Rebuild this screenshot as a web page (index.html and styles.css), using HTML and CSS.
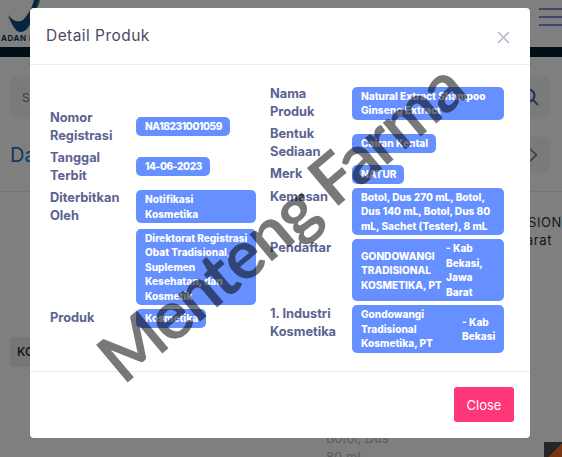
FILE: index.html
```html
<!DOCTYPE html>
<html lang="id">
<head>
  <meta charset="UTF-8" />
  <title>Detail Produk</title>
  <link rel="stylesheet" href="styles.css">
</head>
<body>

  <!-- halaman di belakang modal -->
  <header class="top-bar">
    <div class="logo">
      <svg class="logo-mark" width="40" height="33" viewBox="0 0 40 33">
        <path d="M33 0 C30 10 27 18 24 23 C28 16 36 8 37 0 Z" fill="#1f9a4c"/>
        <path d="M5 15 C10 21 15 23 20 20 C25 15 29 8 31 0 L35 0 C33 12 29 23 24 29 C21 32 17 33 14 31 C10 27 7 21 5 15 Z" fill="#0c4a80"/>
      </svg>
      <span class="logo-text">ADAN POM</span>
    </div>
    <div class="burger"><i></i><i></i><i></i></div>
  </header>
  <div class="dark-strip"></div>

  <div class="search-row">
    <div class="search-box">
      <span>Search</span>
      <svg width="18" height="18" viewBox="0 0 18 18" fill="none" stroke-width="2">
        <circle cx="7.5" cy="7.5" r="6" stroke="#2f62d8"/>
        <path d="M12 12 L17 17" stroke="#5f6b80"/>
      </svg>
    </div>
  </div>

  <div class="title-row">
    <h2>Daftar Produk</h2>
    <div class="next-box">
      <svg width="10" height="16" viewBox="0 0 10 16" fill="none" stroke="#6a7590" stroke-width="1.6"><path d="M1.5 1.5 L8.5 8 L1.5 14.5"/></svg>
    </div>
  </div>

  <div class="page-text">
    <p>TRADISION</p>
    <p class="page-text-sub">Jawa Barat</p>
  </div>

  <div class="tag">KOSMETIKA</div>

  <div class="bottom-row">
    <p class="bottom-text">Botol, Dus<br>80 mL</p>
    <div class="thumb"></div>
  </div>

  <div class="backdrop"></div>

  <!-- modal detail -->
  <div class="modal">
    <div class="modal-header">
      <h3>Detail Produk</h3>
      <svg class="close-x" width="13" height="13" viewBox="0 0 13 13" stroke="#b4bac8" stroke-width="1.6"><path d="M1 1 L12 12 M12 1 L1 12"/></svg>
    </div>

    <div class="modal-body">
      <table class="info left">
        <tr><th>Nomor Registrasi</th><td><span class="badge num">NA18231001059</span></td></tr>
        <tr><th>Tanggal Terbit</th><td><span class="badge num">14-06-2023</span></td></tr>
        <tr><th>Diterbitkan Oleh</th><td><span class="badge">Notifikasi Kosmetika</span></td></tr>
        <tr><th></th><td><span class="badge">Direktorat Registrasi Obat Tradisional, Suplemen Kesehatan, dan Kosmetik</span></td></tr>
        <tr><th>Produk</th><td><span class="badge">Kosmetika</span></td></tr>
      </table>

      <table class="info right">
        <tr><th>Nama Produk</th><td><span class="badge">Natural Extract Shampoo Ginseng Extract</span></td></tr>
        <tr><th>Bentuk Sediaan</th><td><span class="badge">Cairan Kental</span></td></tr>
        <tr><th>Merk</th><td><span class="badge">NATUR</span></td></tr>
        <tr><th>Kemasan</th><td><span class="badge">Botol, Dus 270 mL, Botol, Dus 140 mL, Botol, Dus 80 mL, Sachet (Tester), 8 mL</span></td></tr>
        <tr><th>Pendaftar</th><td><span class="badge split"><span class="name-a">GONDOWANGI TRADISIONAL KOSMETIKA, PT</span><span>- Kab Bekasi, Jawa Barat</span></span></td></tr>
        <tr><th>1. Industri Kosmetika</th><td><span class="badge split"><span class="name-b">Gondowangi Tradisional Kosmetika, PT</span><span>- Kab Bekasi</span></span></td></tr>
      </table>
    </div>

    <div class="modal-footer">
      <button class="close-btn">Close</button>
    </div>
  </div>

  <div class="watermark">Menteng Farma</div>

</body>
</html>
```

FILE: styles.css
```css
* {
  box-sizing: border-box;
}

body {
  margin: 0;
  height: 457px;
  overflow: hidden;
  position: relative;
  background: #fff;
  font-family: "Inter", "Open Sans", sans-serif;
  color: #333;
}

/* halaman belakang */
.top-bar {
  height: 47px;
  display: flex;
  justify-content: space-between;
  overflow: hidden;
}

.logo {
  width: 60px;
  white-space: nowrap;
}

.logo-mark {
  display: block;
  margin-left: 3px;
}

.logo-text {
  display: block;
  margin-left: 1px;
  font-size: 8px;
  font-weight: 700;
  color: #0c3a66;
  letter-spacing: 0.5px;
}

.burger {
  width: 23px;
  margin-top: 8px;
  display: flex;
  flex-direction: column;
  gap: 6px;
}

.burger i {
  display: block;
  height: 2px;
  background: #7d8fe8;
}

.dark-strip {
  height: 10px;
  background: #001c2c;
}

.search-row {
  padding: 20px 12px 0 10px;
}

.search-box {
  height: 40px;
  background: #f4f4f5;
  border-radius: 5px;
  padding: 0 11px 0 12px;
  display: flex;
  align-items: center;
  justify-content: space-between;
  font-size: 12px;
  color: #777;
}

.title-row {
  margin-top: 20px;
  padding: 0 13px 0 10px;
  height: 55px;
  display: flex;
  justify-content: space-between;
  align-items: flex-start;
  border-bottom: 1px solid #e6e6e6;
}

.title-row h2 {
  margin: 4px 0 0;
  font-size: 20px;
  line-height: 28px;
  font-weight: 400;
  color: #1a6fc9;
}

.next-box {
  width: 60px;
  height: 35px;
  background: #f4f4f5;
  border-radius: 5px;
  display: flex;
  align-items: center;
  justify-content: flex-end;
  padding-right: 11px;
}

.page-text {
  margin-top: 21px;
  text-align: right;
  font-size: 13px;
  line-height: 18px;
  letter-spacing: 0.6px;
  white-space: nowrap;
}

.page-text p {
  margin: 0;
}

.page-text-sub {
  padding-right: 10px;
}

.tag {
  margin: 88px 0 0 10px;
  width: 100px;
  height: 30px;
  line-height: 30px;
  padding-left: 7px;
  background: #ececec;
  border-radius: 4px;
  font-size: 12px;
  font-weight: 600;
}

.bottom-row {
  margin-top: 62px;
  padding-left: 326px;
  display: flex;
  justify-content: space-between;
}

.bottom-text {
  margin: 0;
  font-size: 13px;
  line-height: 19px;
  color: #b8b8b8;
}

.thumb {
  width: 18px;
  height: 15px;
  margin-top: 13px;
  background: linear-gradient(135deg, #4c4c4c 0 60%, #f26a21 60%);
}

.backdrop {
  position: absolute;
  inset: 0;
  background: rgba(0, 0, 0, 0.5);
}

/* modal */
.modal {
  position: absolute;
  top: 8px;
  left: 30px;
  width: 500px;
  height: 430px;
  background: #fff;
  border-radius: 4px;
  display: flex;
  flex-direction: column;
}

.modal-header {
  height: 57px;
  padding: 0 20px 0 16px;
  border-bottom: 1px solid #e9ecf4;
  display: flex;
  align-items: center;
  justify-content: space-between;
}

.modal-header h3 {
  margin: 0 0 2px;
  font-size: 15.5px;
  font-weight: 400;
  letter-spacing: 0.45px;
  color: #4b4b63;
}

.close-x {
  margin-top: 3px;
}

.modal-body {
  height: 306px;
  padding: 0 0 0 18px;
  display: flex;
  align-items: center;
  gap: 10px;
}

.info {
  border-collapse: collapse;
  table-layout: fixed;
}

.info.left {
  width: 210px;
}

.info.right {
  width: 238px;
  margin-top: 2px;
}

.info th {
  padding: 2px 0 2px 2px;
  text-align: left;
  vertical-align: top;
  font-size: 12.8px;
  line-height: 18px;
  font-weight: 700;
  color: #5c6391;
}

.info.left th {
  width: 86px;
}

.info.right th {
  width: 82px;
}

.info td {
  padding: 2px;
  vertical-align: middle;
}

.badge {
  display: block;
  width: fit-content;
  padding: 2px 8px 2px 9px;
  border-radius: 5px;
  background: #6690ff;
  color: #fff;
  font-size: 10.1px;
  line-height: 14.5px;
  font-weight: 800;
}

.badge.num {
  letter-spacing: -0.4px;
}

.split {
  display: flex;
  align-items: center;
}

.name-a {
  width: 85px;
  flex: none;
}

.name-b {
  width: 101px;
  flex: none;
}

.modal-footer {
  flex: 1;
  border-top: 1px solid #e9ecf4;
  padding: 15px 16px;
  display: flex;
  justify-content: flex-end;
  align-items: flex-start;
}

.close-btn {
  width: 60px;
  height: 35px;
  border: 0;
  border-radius: 3px;
  background: #ff3677;
  color: #fff;
  font-family: inherit;
  font-size: 13px;
}

/* tanda air */
.watermark {
  position: absolute;
  left: 54px;
  top: 181px;
  transform: rotate(-40deg);
  font-family: "Lato", sans-serif;
  font-size: 68px;
  line-height: 80px;
  font-weight: 700;
  letter-spacing: -1.8px;
  white-space: nowrap;
  color: rgba(0, 0, 0, 0.53);
}
```
